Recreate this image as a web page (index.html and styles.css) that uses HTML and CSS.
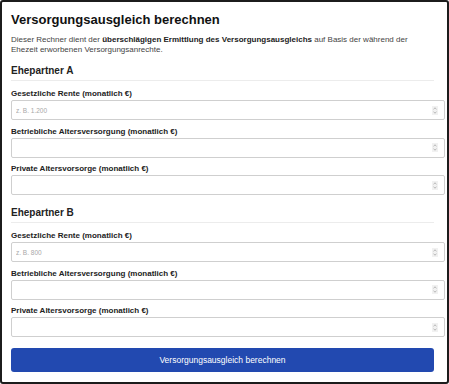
FILE: index.html
```html
<!DOCTYPE html>
<html lang="de">
<head>
  <meta charset="UTF-8">
  <title>Versorgungsausgleich berechnen</title>
  <link rel="stylesheet" href="styles.css">
</head>
<body>
  <div class="rechner">
    <h1>Versorgungsausgleich berechnen</h1>
    <p class="intro">Dieser Rechner dient der <strong>überschlägigen Ermittlung des Versorgungsausgleichs</strong> auf Basis der während der Ehezeit erworbenen Versorgungsanrechte.</p>

    <div class="partner">
      <h2>Ehepartner A</h2>
      <div class="feld">
        <label for="a_rente">Gesetzliche Rente (monatlich €)</label>
        <div class="eingabe">
          <input type="number" id="a_rente" placeholder="z. B. 1.200">
          <svg class="spin" width="6" height="9" viewBox="0 0 6 9"><rect width="6" height="9" fill="#f1f1f1"/><path d="M1.5 3.2 3 1.8 4.5 3.2M1.5 5.8 3 7.2 4.5 5.8" fill="none" stroke="#9a9a9a" stroke-width=".7"/></svg>
        </div>
      </div>
      <div class="feld">
        <label for="a_betrieb">Betriebliche Altersversorgung (monatlich €)</label>
        <div class="eingabe">
          <input type="number" id="a_betrieb">
          <svg class="spin" width="6" height="9" viewBox="0 0 6 9"><rect width="6" height="9" fill="#f1f1f1"/><path d="M1.5 3.2 3 1.8 4.5 3.2M1.5 5.8 3 7.2 4.5 5.8" fill="none" stroke="#9a9a9a" stroke-width=".7"/></svg>
        </div>
      </div>
      <div class="feld">
        <label for="a_privat">Private Altersvorsorge (monatlich €)</label>
        <div class="eingabe">
          <input type="number" id="a_privat">
          <svg class="spin" width="6" height="9" viewBox="0 0 6 9"><rect width="6" height="9" fill="#f1f1f1"/><path d="M1.5 3.2 3 1.8 4.5 3.2M1.5 5.8 3 7.2 4.5 5.8" fill="none" stroke="#9a9a9a" stroke-width=".7"/></svg>
        </div>
      </div>
    </div>

    <div class="partner">
      <h2>Ehepartner B</h2>
      <div class="feld">
        <label for="b_rente">Gesetzliche Rente (monatlich €)</label>
        <div class="eingabe">
          <input type="number" id="b_rente" placeholder="z. B. 800">
          <svg class="spin" width="6" height="9" viewBox="0 0 6 9"><rect width="6" height="9" fill="#f1f1f1"/><path d="M1.5 3.2 3 1.8 4.5 3.2M1.5 5.8 3 7.2 4.5 5.8" fill="none" stroke="#9a9a9a" stroke-width=".7"/></svg>
        </div>
      </div>
      <div class="feld">
        <label for="b_betrieb">Betriebliche Altersversorgung (monatlich €)</label>
        <div class="eingabe">
          <input type="number" id="b_betrieb">
          <svg class="spin" width="6" height="9" viewBox="0 0 6 9"><rect width="6" height="9" fill="#f1f1f1"/><path d="M1.5 3.2 3 1.8 4.5 3.2M1.5 5.8 3 7.2 4.5 5.8" fill="none" stroke="#9a9a9a" stroke-width=".7"/></svg>
        </div>
      </div>
      <div class="feld">
        <label for="b_privat">Private Altersvorsorge (monatlich €)</label>
        <div class="eingabe">
          <input type="number" id="b_privat">
          <svg class="spin" width="6" height="9" viewBox="0 0 6 9"><rect width="6" height="9" fill="#f1f1f1"/><path d="M1.5 3.2 3 1.8 4.5 3.2M1.5 5.8 3 7.2 4.5 5.8" fill="none" stroke="#9a9a9a" stroke-width=".7"/></svg>
        </div>
      </div>
    </div>

    <button class="berechnen">Versorgungsausgleich berechnen</button>
  </div>
</body>
</html>
```

FILE: styles.css
```css
html, body {
  margin: 0;
  padding: 0;
  background: #fff;
}
body {
  font-family: "Liberation Sans", Arial, sans-serif;
  color: #222;
}
.rechner {
  box-sizing: border-box;
  height: 100vh;
  border: 2px solid #1c1c1c;
  border-radius: 3px;
  padding: 10px 13px 0 9px;
}
h1 {
  font-size: 13px;
  line-height: 16px;
  margin: 0;
  color: #111;
}
.intro {
  max-width: 415px;
  font-size: 8px;
  line-height: 10px;
  margin: 7px 0 0;
  color: #444;
}
.intro strong {
  color: #222;
}
.partner h2 {
  font-size: 10px;
  line-height: 12px;
  margin: 10px 0 0;
  padding-bottom: 3px;
  border-bottom: 1px solid #ececec;
  color: #222;
}
.partner + .partner h2 {
  margin-top: 12px;
}
.feld {
  margin-bottom: 6.5px;
}
.partner h2 + .feld {
  margin-top: 8px;
}
.feld label {
  display: block;
  font-size: 8px;
  line-height: 10px;
  font-weight: bold;
  margin-bottom: 1px;
  color: #222;
}
.eingabe {
  position: relative;
  width: calc(100% + 11px);
}
.eingabe input {
  display: block;
  box-sizing: border-box;
  width: 100%;
  height: 20px;
  margin: 0;
  padding: 5px 12px 5px 4px;
  border: 1px solid #cfcfcf;
  border-radius: 2px;
  font-family: inherit;
  font-size: 6.5px;
  color: #222;
  -moz-appearance: textfield;
}
.eingabe input::-webkit-inner-spin-button,
.eingabe input::-webkit-outer-spin-button {
  -webkit-appearance: none;
  margin: 0;
}
.eingabe input::placeholder {
  color: #a8a8a8;
}
.spin {
  position: absolute;
  right: 7px;
  top: 5.5px;
}
.berechnen {
  display: block;
  width: 100%;
  height: 24px;
  margin-top: 10.5px;
  background: #2249b0;
  color: #fff;
  border: none;
  border-radius: 3px;
  font-family: inherit;
  font-size: 8.5px;
  cursor: pointer;
}
```
